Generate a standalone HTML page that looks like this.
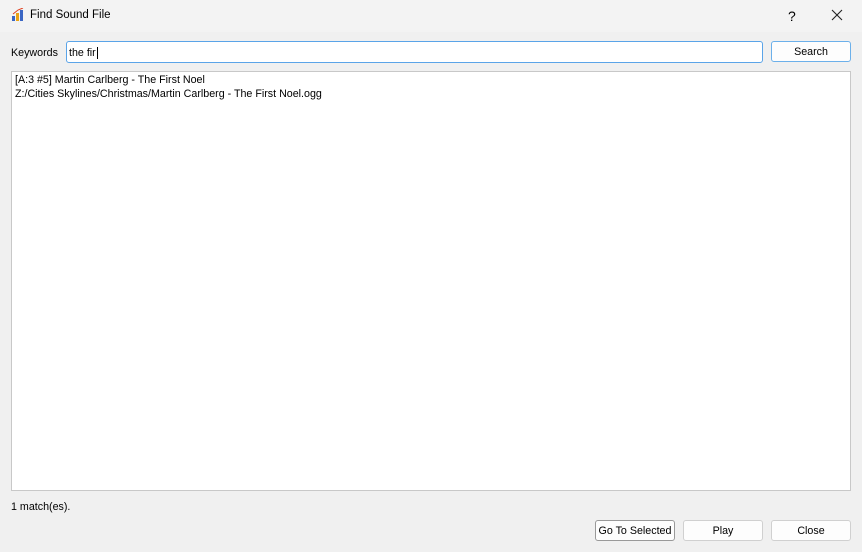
<!DOCTYPE html>
<html><head><style>
body{margin:0;width:862px;height:552px;background:#f0f0f0;font-family:"Liberation Sans",sans-serif;font-size:10.7px;color:#000;position:relative;overflow:hidden}
.a{position:absolute;white-space:nowrap}
.tb{left:0;top:0;width:862px;height:32px;background:#f3f3f3}
.btn{position:absolute;height:19px;border:1px solid #d0d0d0;border-radius:3px;background:#fdfdfd;text-align:center;line-height:21px;box-sizing:content-box;white-space:nowrap}
</style></head><body>
<div class="a tb"></div>
<svg class="a" style="left:11px;top:8px" width="14" height="14" viewBox="0 0 14 14">
<rect x="1" y="8" width="3" height="5" fill="#3a66c4"/><rect x="5" y="5" width="3" height="8" fill="#e8a317"/><rect x="9" y="2" width="3" height="11" fill="#3a66c4"/><path d="M2 6 L7 2 L12 0" stroke="#e04020" fill="none"/></svg>
<div class="a" style="left:30px;top:9px;font-size:11.5px">Find Sound File</div>
<div class="a" style="left:788px;top:8px;font-size:14px">?</div>
<svg class="a" style="left:831px;top:9px" width="12" height="12"><path d="M1 1L11 11M11 1L1 11" stroke="#222" stroke-width="1.1"/></svg>
<div class="a" style="left:11px;top:47px">Keywords</div>
<div class="a" style="left:66px;top:41px;width:695px;height:20px;border:1px solid #5aa4e8;border-radius:3px;background:#fff"></div>
<div class="a" style="left:69px;top:47px">the fir<span style="border-left:1px solid #000;margin-left:1px"></span></div>
<div class="btn" style="left:771px;top:41px;width:78px;border-color:#6cb0ea">Search</div>
<div class="a" style="left:11px;top:71px;width:838px;height:418px;border:1px solid #c8c8c8;background:#fff"></div>
<div class="a" style="left:15px;top:73px;line-height:14px">[A:3 #5] Martin Carlberg - The First Noel<br>Z:/Cities Skylines/Christmas/Martin Carlberg - The First Noel.ogg</div>
<div class="a" style="left:11px;top:501px">1 match(es).</div>
<div class="btn" style="left:595px;top:520px;width:78px;border-color:#999">Go To Selected</div>
<div class="btn" style="left:683px;top:520px;width:78px">Play</div>
<div class="btn" style="left:771px;top:520px;width:78px">Close</div>
</body></html>
